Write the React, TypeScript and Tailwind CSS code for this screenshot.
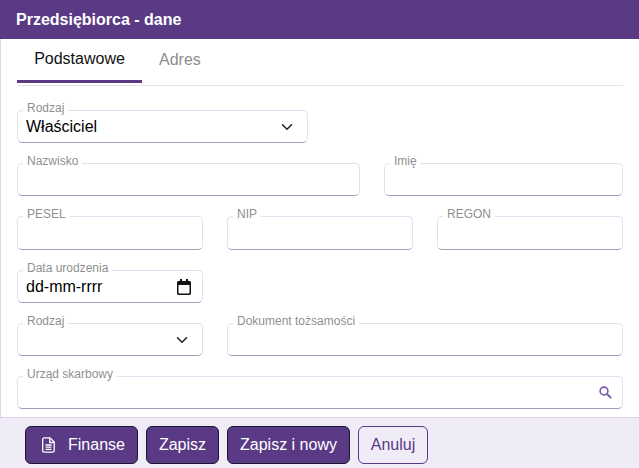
import { ChevronDown } from "lucide-react";
import type { ReactNode } from "react";

function Field({ label, children, className = "" }: { label: string; children?: ReactNode; className?: string }) {
  return (
    <div className={`relative rounded-[5px] border border-[#e3dff0] border-b-[#a39cb8] bg-white flex items-center justify-between pl-2 pr-[10px] ${className || "h-[33px]"}`}>
      <span className="absolute left-[5px] top-[-10px] bg-white px-1 text-xs leading-[14px] text-[#8f8f8f]">{label}</span>
      {children}
    </div>
  );
}

function CalendarIcon() {
  return (
    <svg width="14" height="16" viewBox="0 0 14 16" className="mr-[1px] text-[#111]">
      <path d="M3 0h2v2h4V0h2v2h1.500A1.500 1.500 0 0 1 14 3.500v11a1.500 1.500 0 0 1-1.500 1.500h-11A1.500 1.500 0 0 1 0 14.500v-11A1.500 1.500 0 0 1 1.500 2H3zM1.500 6v8.500h11V6z" fill="currentColor" />
    </svg>
  );
}

function FileIcon() {
  return (
    <svg width="13" height="16" viewBox="0 0 13 16" fill="none" stroke="currentColor" strokeWidth="1.300">
      <path d="M2 .8h6L12.200 5v8.700a1.500 1.500 0 0 1-1.500 1.500H2a1.500 1.500 0 0 1-1.300-1.500V2.300A1.500 1.500 0 0 1 2 .8z" />
      <path d="M7.700 1v4.500h4.500M3.500 8h6M3.500 10.200h6M3.500 12.400h6" />
    </svg>
  );
}

function SearchIcon() {
  return (
    <svg width="13" height="13" viewBox="0 0 13 13" fill="none" stroke="currentColor" className="text-[#7657ab]">
      <circle cx="5" cy="5" r="3.900" strokeWidth="1.600" />
      <path d="M8 8l4.200 4.200" strokeWidth="1.800" />
    </svg>
  );
}

export default function App() {
  return (
    <div className="w-[639px] h-[468px] overflow-hidden flex flex-col bg-white font-['Liberation_Sans',Arial,sans-serif]">
      <header className="h-[39px] shrink-0 bg-[#5a3a85] px-4 flex items-center text-base font-bold text-white">
        Przedsiębiorca - dane
      </header>

      <main className="flex-1 border-l border-[#e0d6f3] px-4 flex flex-col">
        {/* Tabs */}
        <div className="h-[47px] shrink-0 flex border-b border-[#e4e2e8] text-base">
          <div className="w-[125px] flex items-center justify-center pb-[2px] border-b-[3px] border-[#5a3a85] h-[44px] text-[#111]">
            Podstawowe
          </div>
          <div className="ml-[17px] h-[44px] flex items-center pb-[2px] text-[#8c8c8c]">Adres</div>
        </div>

        <div className="flex flex-col gap-5 pt-6">
          <Field label="Rodzaj" className="w-[291px] h-[33px]">
            <span className="text-base text-black">Właściciel</span>
            <ChevronDown size={18} className="mr-[1px] text-[#222]" />
          </Field>

          <div className="grid grid-cols-[343px_1fr] gap-x-6">
            <Field label="Nazwisko" />
            <Field label="Imię" />
          </div>

          <div className="grid grid-cols-3 gap-x-6">
            <Field label="PESEL" className="h-[34px]" />
            <Field label="NIP" className="h-[34px]" />
            <Field label="REGON" className="h-[34px]" />
          </div>

          <div className="grid grid-cols-3 gap-x-6">
            <Field label="Data urodzenia">
              <span className="text-base text-black">dd-mm-rrrr</span>
              <CalendarIcon />
            </Field>
          </div>

          <div className="grid grid-cols-3 gap-x-6">
            <Field label="Rodzaj" className="h-[33px] justify-end">
              <ChevronDown size={18} className="mr-[1px] text-[#222]" />
            </Field>
            <Field label="Dokument tożsamości" className="col-span-2 h-[33px]" />
          </div>

          <Field label="Urząd skarbowy" className="h-[33px] justify-end">
            <SearchIcon />
          </Field>
        </div>
      </main>

      <footer className="h-[51px] shrink-0 border-t border-[#dcd2ee] bg-[#f0ecf7] pl-[25px] pt-2 flex gap-2 text-base">
        <button className="w-[113px] h-[38px] rounded-[6px] border border-[#1d1630] bg-[#5a3a85] text-white flex items-center pl-4 gap-[13px]">
          <FileIcon />
          Finanse
        </button>
        <button className="w-[73px] h-[38px] rounded-[6px] border border-[#1d1630] bg-[#5a3a85] text-white">Zapisz</button>
        <button className="w-[123px] h-[38px] rounded-[6px] border border-[#1d1630] bg-[#5a3a85] text-white">Zapisz i nowy</button>
        <button className="w-[70px] h-[38px] rounded-[6px] border border-[#5a3a85] text-[#5a3a85]">Anuluj</button>
      </footer>
    </div>
  );
}
